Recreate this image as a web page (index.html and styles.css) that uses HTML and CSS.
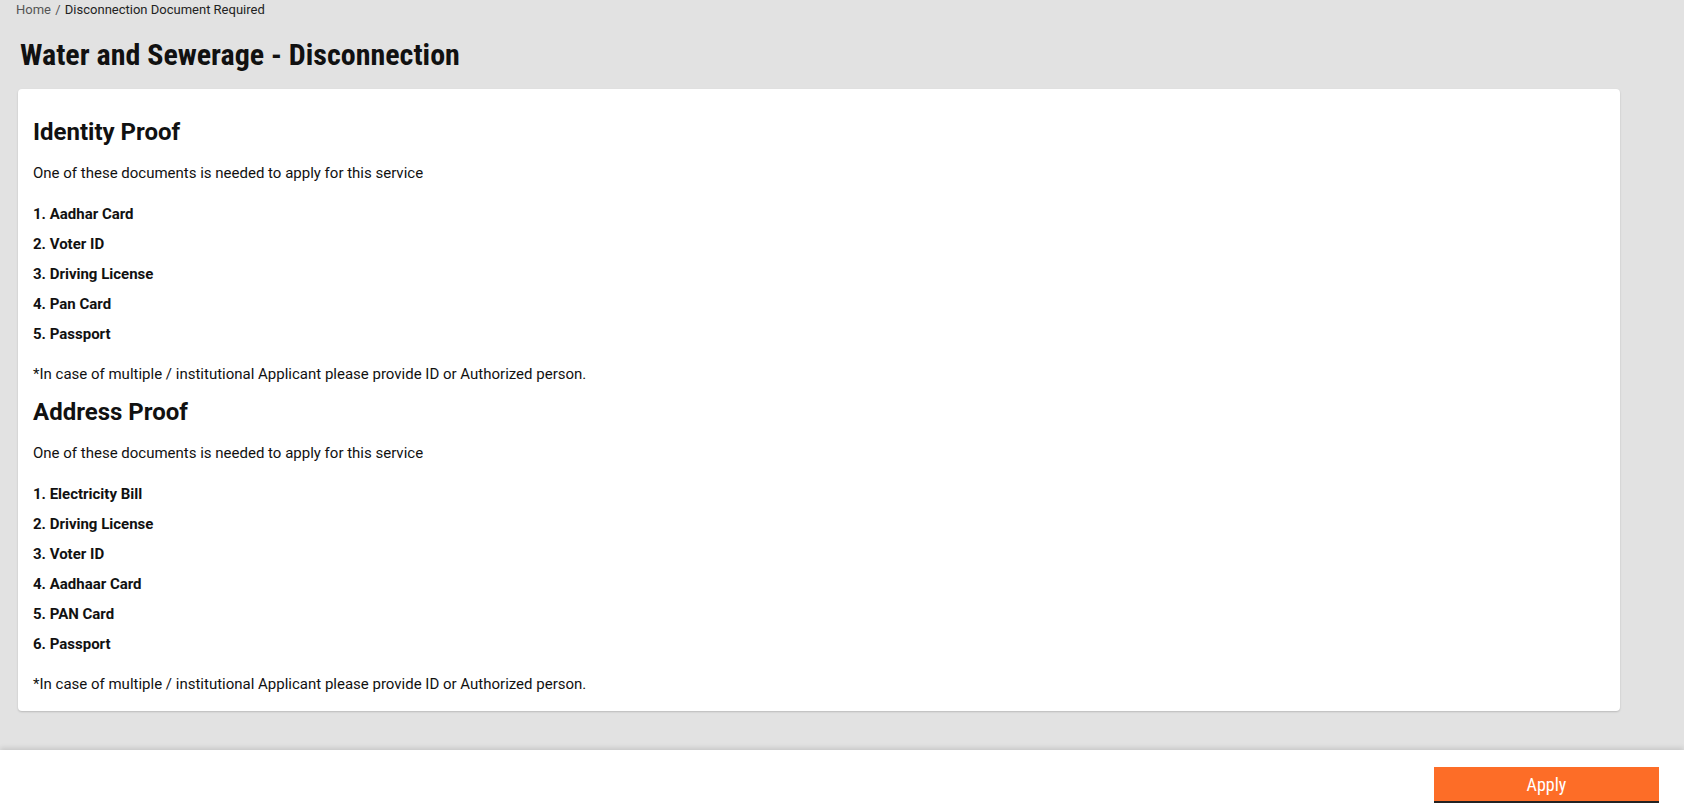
FILE: index.html
```html
<!DOCTYPE html>
<html lang="en">

<head>
  <meta charset="UTF-8">
  <meta name="viewport" content="width=device-width, initial-scale=1.0">
  <title>Disconnection Document Required</title>
  <link rel="stylesheet" href="styles.css">
</head>

<body>
  <main>
    <nav class="breadcrumb">
      <a href="#">Home</a>
      <span class="sep">/</span>
      <span class="current">Disconnection Document Required</span>
    </nav>

    <h1 class="page-title">Water and Sewerage - Disconnection</h1>

    <section class="card">
      <div class="doc-group">
        <h2>Identity Proof</h2>
        <p class="lead">One of these documents is needed to apply for this service</p>
        <ol>
          <li>1. Aadhar Card</li>
          <li>2. Voter ID</li>
          <li>3. Driving License</li>
          <li>4. Pan Card</li>
          <li>5. Passport</li>
        </ol>
        <p class="note">*In case of multiple / institutional Applicant please provide ID or Authorized person.</p>
      </div>

      <div class="doc-group">
        <h2>Address Proof</h2>
        <p class="lead">One of these documents is needed to apply for this service</p>
        <ol>
          <li>1. Electricity Bill</li>
          <li>2. Driving License</li>
          <li>3. Voter ID</li>
          <li>4. Aadhaar Card</li>
          <li>5. PAN Card</li>
          <li>6. Passport</li>
        </ol>
        <p class="note">*In case of multiple / institutional Applicant please provide ID or Authorized person.</p>
      </div>
    </section>
  </main>

  <footer>
    <button class="apply">Apply</button>
  </footer>
</body>

</html>
```

FILE: styles.css
```css
/* Base */
* {
  box-sizing: border-box;
  margin: 0;
  padding: 0;
}

html,
body {
  height: 100%;
}

body {
  display: flex;
  flex-direction: column;
  font-family: Roboto, 'Liberation Sans', sans-serif;
  color: #111;
  background: #e2e2e2;
}

main {
  flex: 1;
  padding: 0 64px 0 18px;
}

/* Breadcrumb */
.breadcrumb {
  font-size: 13px;
  line-height: 20px;
  margin-left: -2px;
}

.breadcrumb a {
  color: #555;
  text-decoration: none;
}

.breadcrumb .sep {
  color: #555;
  margin: 0 1px;
}

.breadcrumb .current {
  color: #222;
}

/* Page title */
.page-title {
  font-family: 'Roboto Condensed', 'Liberation Sans Narrow', Roboto, sans-serif;
  font-size: 30px;
  font-weight: 700;
  line-height: 36px;
  color: #111;
  margin: 17px 0 16px 2px;
}

/* Documents card */
.card {
  background: #fff;
  border-radius: 4px;
  padding: 15px 15px 17px;
  box-shadow: 0 1px 2px rgba(0, 0, 0, 0.18);
}

.doc-group h2 {
  font-size: 24px;
  font-weight: 700;
  line-height: 28px;
  margin: 14px 0 17px;
}

.lead,
.note {
  font-size: 15px;
  line-height: 20px;
}

.lead {
  margin-bottom: 21px;
}

ol {
  list-style: none;
  padding-bottom: 10px;
}

ol li {
  font-size: 15px;
  font-weight: 700;
  line-height: 20px;
  margin-bottom: 10px;
}

/* Footer action bar */
footer {
  height: 60px;
  flex-shrink: 0;
  background: #fff;
  display: flex;
  justify-content: flex-end;
  align-items: flex-start;
  padding: 17px 25px 0;
  box-shadow: 0 -2px 5px rgba(0, 0, 0, 0.12);
}

button.apply {
  width: 225px;
  height: 36px;
  border: none;
  border-bottom: 2px solid #222;
  background-color: #fd6d27;
  color: #fff;
  font-family: 'Roboto Condensed', 'Liberation Sans Narrow', Roboto, sans-serif;
  font-size: 18px;
  cursor: pointer;
}
```
